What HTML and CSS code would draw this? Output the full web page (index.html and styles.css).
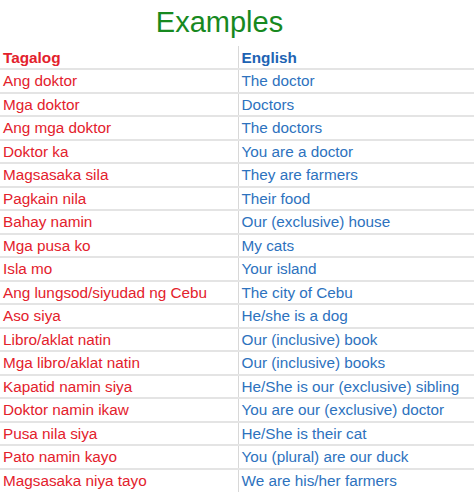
FILE: index.html
```html
<!DOCTYPE html>
<html>
<head>
<meta charset="utf-8">
<link rel="stylesheet" href="styles.css">
</head>
<body>
<h1 class="title">Examples</h1>
<table class="examples">
  <thead>
    <tr><th class="tl">Tagalog</th><th class="en">English</th></tr>
  </thead>
  <tbody>
    <tr><td class="tl">Ang doktor</td><td class="en">The doctor</td></tr>
    <tr><td class="tl">Mga doktor</td><td class="en">Doctors</td></tr>
    <tr><td class="tl">Ang mga doktor</td><td class="en">The doctors</td></tr>
    <tr><td class="tl">Doktor ka</td><td class="en">You are a doctor</td></tr>
    <tr><td class="tl">Magsasaka sila</td><td class="en">They are farmers</td></tr>
    <tr><td class="tl">Pagkain nila</td><td class="en">Their food</td></tr>
    <tr><td class="tl">Bahay namin</td><td class="en">Our (exclusive) house</td></tr>
    <tr><td class="tl">Mga pusa ko</td><td class="en">My cats</td></tr>
    <tr><td class="tl">Isla mo</td><td class="en">Your island</td></tr>
    <tr><td class="tl">Ang lungsod/siyudad ng Cebu</td><td class="en">The city of Cebu</td></tr>
    <tr><td class="tl">Aso siya</td><td class="en">He/she is a dog</td></tr>
    <tr><td class="tl">Libro/aklat natin</td><td class="en">Our (inclusive) book</td></tr>
    <tr><td class="tl">Mga libro/aklat natin</td><td class="en">Our (inclusive) books</td></tr>
    <tr><td class="tl">Kapatid namin siya</td><td class="en">He/She is our (exclusive) sibling</td></tr>
    <tr><td class="tl">Doktor namin ikaw</td><td class="en">You are our (exclusive) doctor</td></tr>
    <tr><td class="tl">Pusa nila siya</td><td class="en">He/She is their cat</td></tr>
    <tr><td class="tl">Pato namin kayo</td><td class="en">You (plural) are our duck</td></tr>
    <tr><td class="tl">Magsasaka niya tayo</td><td class="en">We are his/her farmers</td></tr>
  </tbody>
</table>
</body>
</html>
```
FILE: styles.css
```css
html, body {
  margin: 0;
  padding: 0;
  background: #ffffff;
}
body {
  font-family: "Liberation Sans", Arial, sans-serif;
  width: 474px;
  overflow: hidden;
}
.title {
  margin: 0;
  height: 46px;
  box-sizing: border-box;
  padding: 3px 0 0 0;
  padding-right: 35px;
  text-align: center;
  font-weight: normal;
  font-size: 29px;
  line-height: 38px;
  color: #17891f;
}
.examples {
  width: 100%;
  border-collapse: collapse;
  table-layout: fixed;
  font-size: 15.3px;
}
.examples th, .examples td {
  text-align: left;
  padding: 0 0 0 3px;
  height: 23.5px;
  box-sizing: border-box;
  border-bottom: 2px solid #e4e4e4;
  white-space: nowrap;
  line-height: 17px;
}
.examples thead th {
  height: 23px;
  font-weight: bold;
}
.examples .tl {
  width: 238px;
  color: #e3212c;
  border-right: 1px solid #d8d8d8;
}
.examples .en {
  color: #2d72be;
  padding-left: 3px;
}
.examples thead .en {
  color: #1e63b3;
}
.examples tbody tr:last-child td {
  border-bottom: none;
}
```
